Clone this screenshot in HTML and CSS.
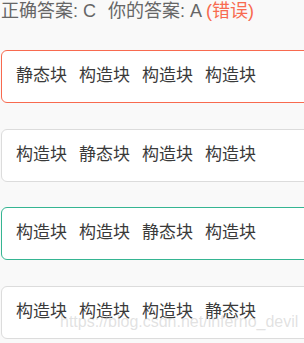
FILE: index.html
```html
<!DOCTYPE html>
<html lang="zh-CN">
<head>
    <meta charset="utf-8">
    <title>答题结果</title>
    <link rel="stylesheet" href="styles.css">
</head>
<body>
    <div class="page">
        <div class="result">
            <span>正确答案: C</span>
            <span class="mine">你的答案: A <span class="wrong">(错误)</span></span>
        </div>

        <div class="option wrong-choice">
            <span>静态块</span><span>构造块</span><span>构造块</span><span>构造块</span>
        </div>
        <div class="option">
            <span>构造块</span><span>静态块</span><span>构造块</span><span>构造块</span>
        </div>
        <div class="option right-choice">
            <span>构造块</span><span>构造块</span><span>静态块</span><span>构造块</span>
        </div>
        <div class="option">
            <span>构造块</span><span>构造块</span><span>构造块</span><span>静态块</span>
        </div>

        <div class="watermark">https://blog.csdn.net/inferno_devil</div>
    </div>
</body>
</html>
```

FILE: styles.css
```css
html, body {
	margin: 0;
	padding: 0;
	background-color: #f9f9f9;
	overflow: hidden;
}
.page {
	position: relative;
	font-family: "Liberation Sans", "Noto Sans CJK SC", sans-serif;
}
.result {
	padding-left: 1px;
	font-size: 18px;
	line-height: 22px;
	color: #666;
	margin-bottom: 28px;
	white-space: nowrap;
}
.result .mine {
	margin-left: 7px;
}
.result .wrong {
	color: #f86a4f;
}
.option {
	box-sizing: border-box;
	width: 340px;
	height: 53px;
	margin-left: 1px;
	margin-bottom: 25.5px;
	padding: 14px 14px 0;
	font-size: 17px;
	line-height: 22px;
	color: #3a3a3a;
	background-color: #fff;
	border: 1px solid #dcdcdc;
	border-radius: 6px;
	white-space: nowrap;
}
.option span {
	margin-right: 12px;
}
.wrong-choice {
	border-color: #f86a4f;
}
.right-choice {
	border-color: #35b592;
}
.watermark {
	position: absolute;
	left: 60px;
	top: 313px;
	font-size: 16px;
	line-height: 18px;
	color: rgba(190, 190, 190, 0.45);
	white-space: nowrap;
}
```
